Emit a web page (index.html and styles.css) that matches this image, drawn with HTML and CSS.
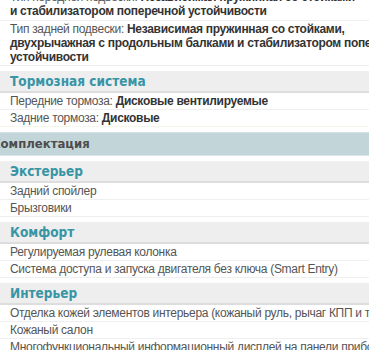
FILE: index.html
```html
<!DOCTYPE html>
<html lang="ru">
<head>
<meta charset="utf-8">
<link rel="stylesheet" href="styles.css">
</head>
<body>
<div class="page">
  <div class="specs">
    <div class="row">Тип передней подвески: <b>Независимая пружинная со стойками<br>и стабилизатором поперечной устойчивости</b></div>
    <div class="row">Тип задней подвески: <b>Независимая пружинная со стойками, двухрычажная с продольным балками и стабилизатором поперечной устойчивости</b></div>
    <h3 class="sub">Тормозная система</h3>
    <div class="row">Передние тормоза: <b>Дисковые вентилируемые</b></div>
    <div class="row last">Задние тормоза: <b>Дисковые</b></div>
  </div>
  <h2 class="main">Комплектация</h2>
  <div class="specs">
    <h3 class="sub first">Экстерьер</h3>
    <div class="row">Задний спойлер</div>
    <div class="row">Брызговики</div>
    <h3 class="sub">Комфорт</h3>
    <div class="row">Регулируемая рулевая колонка</div>
    <div class="row">Система доступа и запуска двигателя без ключа (Smart Entry)</div>
    <h3 class="sub">Интерьер</h3>
    <div class="row">Отделка кожей элементов интерьера (кожаный руль, рычаг КПП и тормоза)</div>
    <div class="row">Кожаный салон</div>
    <div class="row">Многофункциональный информационный дисплей на панели приборов</div>
  </div>
</div>
</body>
</html>
```
FILE: styles.css
```css
html, body {
  margin: 0;
  padding: 0;
  background: #fff;
  overflow: hidden;
}
body {
  width: 369px;
  height: 350px;
  font-family: "Liberation Sans", Arial, sans-serif;
  font-size: 12px;
  letter-spacing: -0.3px;
  color: #555;
}
.page {
  width: 428px;
  margin-top: -11px;
}
.row {
  padding: 1px 10px;
  line-height: 14px;
  border-bottom: 1px solid #efefef;
}
.row:first-child {
  padding-bottom: 2px;
}
.row b {
  color: #333;
}
.row.last {
  border-bottom-color: #f6f6e8;
}
.sub {
  margin: 5px 0 0;
  padding: 0 10px;
  height: 20px;
  line-height: 21px;
  background: #eeeeee;
  border-bottom: 2px solid #dddddd;
  font-family: "DejaVu Sans Condensed", "DejaVu Sans", Verdana, sans-serif;
  font-stretch: condensed;
  font-size: 13.5px;
  letter-spacing: 0;
  font-weight: bold;
  color: #3895a5;
  white-space: nowrap;
}
.sub.first {
  margin-top: 5px;
}
.main {
  margin: 5px 0 0 -10px;
  padding: 0 0 0 1px;
  height: 22px;
  line-height: 22px;
  background: #c2d6da;
  border-top: 1px solid #d4e1e3;
  border-bottom: 1px solid #dce7e9;
  font-family: "DejaVu Sans Condensed", "DejaVu Sans", Verdana, sans-serif;
  font-stretch: condensed;
  font-size: 13px;
  letter-spacing: 0;
  font-weight: bold;
  color: #4d4d4d;
}
```
